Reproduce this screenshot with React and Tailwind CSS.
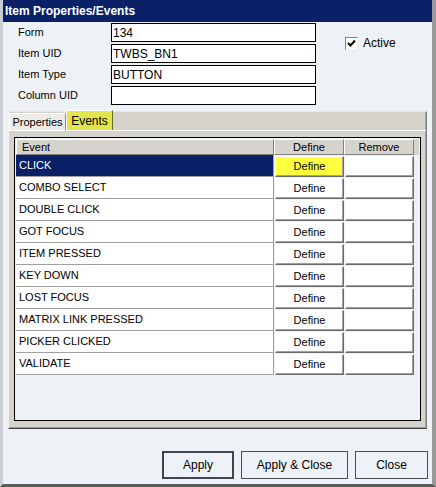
import React from 'react';

const events = [
  'CLICK',
  'COMBO SELECT',
  'DOUBLE CLICK',
  'GOT FOCUS',
  'ITEM PRESSED',
  'KEY DOWN',
  'LOST FOCUS',
  'MATRIX LINK PRESSED',
  'PICKER CLICKED',
  'VALIDATE',
];

const fields = [
  { label: 'Form', value: '134' },
  { label: 'Item UID', value: 'TWBS_BN1' },
  { label: 'Item Type', value: 'BUTTON' },
  { label: 'Column UID', value: '' },
];

// raised little cell, like the old SBO grid buttons
const CellButton = ({ children, selected }) => (
  <div
    className={`h-[21px] w-[69px] mr-px flex items-center justify-center border border-t-white border-l-white border-r-[#6b6b6b] border-b-[#6b6b6b] shadow-[inset_-1px_-1px_0_#a0a0a0] ${
      selected ? 'bg-[#ffff40]' : 'bg-white'
    }`}
  >
    {children}
  </div>
);

export default function App() {
  return (
    <div
      className="w-[436px] h-[487px] bg-[#eef2f6] flex flex-col border-l-[3px] border-l-[#c9ccd0] border-r-[4px] border-r-[#9a9a9a] border-b-[3px] border-b-[#5a5a5a] text-[11px] text-black overflow-hidden"
      style={{ fontFamily: '"Liberation Sans", Arial, sans-serif' }}
    >
      {/* title bar */}
      <div className="h-[22px] -ml-[3px] bg-[#0b2167] text-white font-bold text-[12px] flex items-center pl-[5px] shrink-0">
        Item Properties/Events
      </div>

      {/* header fields */}
      <div className="flex h-[88px] shrink-0">
        <div className="flex flex-col gap-[2px] pt-px">
          {fields.map((f) => (
            <div key={f.label} className="flex items-center h-[19px]">
              <span className="w-[108px] pl-[15px]">{f.label}</span>
              <div className="w-[205px] h-[19px] bg-white border border-black flex items-center px-[1px] text-[12px]">
                {f.value}
              </div>
            </div>
          ))}
        </div>
        <div className="flex items-center ml-[29px] mt-[14px] h-[14px] gap-[5px]">
          <div className="w-[13px] h-[13px] bg-white border border-t-[#808080] border-l-[#808080] border-r-[#f0f0f0] border-b-[#f0f0f0] flex items-center justify-center">
            <svg width="9" height="9" viewBox="0 0 9 9">
              <path d="M1 4 L3.5 6.5 L8 1.5" fill="none" stroke="#000" strokeWidth="2" />
            </svg>
          </div>
          <span className="text-[12px]">Active</span>
        </div>
      </div>

      {/* tab panel, tab strip included */}
      <div className="mx-[5px] mt-[1px] h-[318px] bg-[#d6d3cd] border border-t-[#e8e8e8] border-l-[#f4f4f4] border-r-[#808080] border-b-[#404040] shadow-[inset_-1px_-1px_0_#a0a0a0] flex flex-col shrink-0">
        <div className="flex items-end h-[18px]">
          <div className="h-[17px] w-[57px] bg-[#ecebe8] border border-b-0 border-t-white border-l-white border-r-[#8a8a8a] flex items-center justify-center">
            Properties
          </div>
          <div className="h-[20px] -mt-[2px] w-[47px] bg-[#e4e44c] border border-b-0 border-t-white border-l-white border-r-[#6e6e2a] flex items-center justify-center text-[12px]">
            Events
          </div>
        </div>
        <div className="flex-1 px-[5px] pt-[6px] pb-[7px] flex border-t border-t-white">
          <div className="flex-1 border border-black bg-[#eef2f6] p-px flex flex-col">
            {/* column header */}
            <div className="flex h-[16px] bg-[#d6d3cd]">
              <div className="w-[258px] border border-t-white border-l-white border-r-[#808080] border-b-[#808080] pl-[5px] flex items-center">
                Event
              </div>
              <div className="w-[70px] border border-t-white border-l-white border-r-[#808080] border-b-[#808080] flex items-center justify-center">
                Define
              </div>
              <div className="w-[70px] border border-t-white border-l-white border-r-[#808080] border-b-[#808080] flex items-center justify-center">
                Remove
              </div>
              <div className="flex-1" />
            </div>
            {events.map((ev, i) => (
              <div key={ev} className="flex h-[22px]">
                <div
                  className={`w-[258px] flex items-center pl-[3px] border-r border-b border-[#a0a0a0] ${
                    i === 0 ? 'bg-[#0b2167] text-white' : 'bg-white'
                  }`}
                >
                  {ev}
                </div>
                <div className="pl-px pt-px flex">
                  <CellButton selected={i === 0}>Define</CellButton>
                  <CellButton />
                </div>
              </div>
            ))}
          </div>
        </div>
      </div>

      {/* buttons */}
      <div className="flex-1 flex justify-end items-start gap-[7px] pt-[22px] pr-[4px]">
        <button className="w-[72px] h-[28px] bg-[#eef2f6] border-2 border-[#3c4550] text-[12px]">
          Apply
        </button>
        <button className="w-[107px] h-[28px] bg-[#eef2f6] border border-[#4a4f55] text-[12px]">
          Apply &amp; Close
        </button>
        <button className="w-[73px] h-[28px] bg-[#eef2f6] border border-[#4a4f55] text-[12px]">
          Close
        </button>
      </div>
    </div>
  );
}
